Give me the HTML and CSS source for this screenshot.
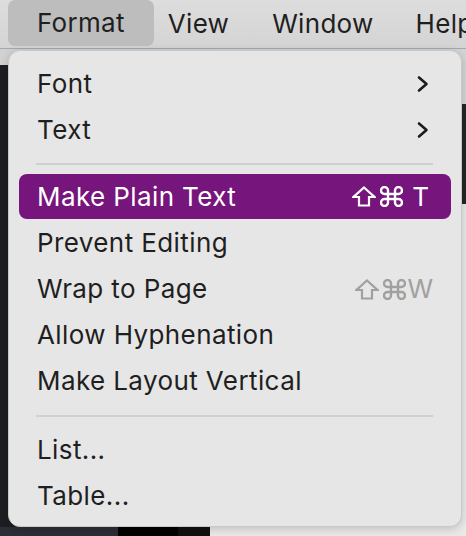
FILE: index.html
```html
<!DOCTYPE html>
<html>
<head>
<meta charset="utf-8">
<link rel="stylesheet" href="styles.css">
</head>
<body>
<div class="menubar">
  <div class="mb-item active">Format</div>
  <div class="mb-item">View</div>
  <div class="mb-item">Window</div>
  <div class="mb-item">Help</div>
</div>
<div class="desk">
  <div class="left-pane">
    <div class="lp-top"></div>
    <div class="lp-body"></div>
    <div class="lp-bottom">
      <div class="b1"></div><div class="b2"></div><div class="b3"></div>
    </div>
  </div>
  <div class="right-pane">
    <div class="rp-top"></div>
    <div class="rp-dark"></div>
    <div class="rp-rest"></div>
  </div>
</div>

<div class="menu">
  <div class="row"><span class="label">Font</span>
    <svg class="chev" width="14" height="18" viewBox="0 0 14 18"><path d="M3 2.5 L10.5 9 L3 15.5" fill="none" stroke="#1c1c1c" stroke-width="2.6" stroke-linecap="round" stroke-linejoin="round"/></svg>
  </div>
  <div class="row"><span class="label">Text</span>
    <svg class="chev" width="14" height="18" viewBox="0 0 14 18"><path d="M3 2.5 L10.5 9 L3 15.5" fill="none" stroke="#1c1c1c" stroke-width="2.6" stroke-linecap="round" stroke-linejoin="round"/></svg>
  </div>
  <div class="sep"></div>
  <div class="row hl"><span class="label">Make Plain Text</span>
    <span class="key">
      <svg class="sym" width="24" height="21" viewBox="0 0 24 21"><path d="M12 1.5 L22.5 11 L17 11 L17 19.5 L7 19.5 L7 11 L1.5 11 Z" fill="none" stroke="currentColor" stroke-width="2.2" stroke-linejoin="miter"/></svg>
      <svg class="sym cmd" width="23" height="21" viewBox="0 0 23 21"><path d="M8 8 V4.5 A3.5 3.5 0 1 0 4.5 8 H18.5 A3.5 3.5 0 1 0 15 4.5 V16.5 A3.5 3.5 0 1 0 18.5 13 H4.5 A3.5 3.5 0 1 0 8 16.5 Z" fill="none" stroke="currentColor" stroke-width="2.4"/></svg>
      <span class="kt">T</span>
    </span>
  </div>
  <div class="row"><span class="label">Prevent Editing</span></div>
  <div class="row"><span class="label">Wrap to Page</span>
    <span class="key dim">
      <svg class="sym" width="24" height="21" viewBox="0 0 24 21"><path d="M12 1.5 L22.5 11 L17 11 L17 19.5 L7 19.5 L7 11 L1.5 11 Z" fill="none" stroke="currentColor" stroke-width="2.2" stroke-linejoin="miter"/></svg>
      <svg class="sym cmd" width="23" height="21" viewBox="0 0 23 21"><path d="M8 8 V4.5 A3.5 3.5 0 1 0 4.5 8 H18.5 A3.5 3.5 0 1 0 15 4.5 V16.5 A3.5 3.5 0 1 0 18.5 13 H4.5 A3.5 3.5 0 1 0 8 16.5 Z" fill="none" stroke="currentColor" stroke-width="2.4"/></svg>
      <span class="kw">W</span>
    </span>
  </div>
  <div class="row"><span class="label">Allow Hyphenation</span></div>
  <div class="row"><span class="label">Make Layout Vertical</span></div>
  <div class="sep sep2"></div>
  <div class="row"><span class="label">List...</span></div>
  <div class="row"><span class="label">Table...</span></div>
</div>
</body>
</html>
```

FILE: styles.css
```css
* { box-sizing: border-box; }
html, body { margin: 0; padding: 0; }
body {
  width: 466px;
  height: 536px;
  overflow: hidden;
  position: relative;
  background: #e8e8e8;
  font-family: Inter, "Noto Sans", sans-serif;
  color: #1f1f1f;
}
.menubar {
  height: 49px;
  display: flex;
  align-items: stretch;
  padding-left: 8px;
  background: linear-gradient(#dddddd, #d4d4d4);
  border-bottom: 1px solid #9eabb4;
  font-size: 26px;
  letter-spacing: 0.3px;
  white-space: nowrap;
}
.mb-item {
  display: flex;
  align-items: center;
  padding: 0 15px 2px 28px;
}
.mb-item.active {
  background: #bdbdbd;
  border-radius: 7px;
  padding: 0 29px 2px 29px;
  margin-bottom: 2px;
}
.mb-item:nth-child(2) { padding-left: 14px; padding-right: 0; }
.mb-item:nth-child(3) { padding-left: 43px; }
.mb-item:nth-child(4) { padding-left: 27px; }

.desk {
  display: flex;
  height: 487px;
}
.left-pane {
  width: 210px;
  display: flex;
  flex-direction: column;
}
.lp-top { height: 16px; background: #d2d2d2; }
.lp-body { flex: 1; background: #1c1e22; }
.lp-bottom { height: 9px; display: flex; }
.b1 { width: 118px; background: #2c2e37; }
.b2 { width: 60px; background: #000; }
.b3 { flex: 1; background: #101010; }
.right-pane {
  flex: 1;
  display: flex;
  flex-direction: column;
}
.rp-top { height: 55px; background: #d4d4d4; }
.rp-dark { height: 100px; background: #242527; }
.rp-rest { flex: 1; background: #e9e9e9; }

.menu {
  position: absolute;
  left: 8px;
  top: 50px;
  width: 454px;
  height: 477px;
  background: #e6e6e6;
  border: 1px solid #c9c9c9;
  border-radius: 12px;
  box-shadow: 0 2px 8px rgba(0,0,0,0.18);
  padding: 10px 10px 0 9px;
  font-size: 26px;
}
.row {
  height: 46px;
  display: flex;
  align-items: center;
  padding: 0 0 1px 19px;
  border-radius: 8px;
  letter-spacing: 0.4px;
}
.label { flex: 1; white-space: nowrap; }
.chev { margin-right: 21px; }
.sep {
  height: 21px;
  margin: 0 18px;
  display: flex;
  align-items: center;
}
.sep::before {
  content: "";
  display: block;
  width: 100%;
  height: 2px;
  background: #d0d0d0;
}
.sep2 { height: 23px; }
.hl {
  background: #76157b;
  color: #fff;
  height: 45px;
  margin-bottom: 1px;
  margin-left: 1px;
  padding-left: 18px;
}
.key {
  display: flex;
  align-items: center;
  margin-right: 22px;
  font-size: 26px;
  letter-spacing: 0;
}
.sym { display: block; margin-top: 1px; }
.cmd { margin-left: 4px; }
.kt { margin-left: 9px; }
.kw { margin-left: 1px; }
.dim { color: #a0a0a0; margin-right: 18px; }
```
